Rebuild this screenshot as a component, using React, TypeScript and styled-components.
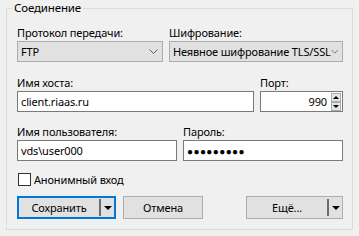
import React from 'react';
import styled, { createGlobalStyle } from 'styled-components';

const GlobalStyle = createGlobalStyle`
  html, body {
    margin: 0;
    padding: 0;
    background: #f0f0f0;
  }
  body {
    font-family: "Noto Sans", "Segoe UI", sans-serif;
    font-size: 11px;
    letter-spacing: -0.15px;
    color: #000;
  }
`;

const Window = styled.div`
  width: 359px;
  height: 236px;
  box-sizing: border-box;
  padding: 0 6px;
  background: #f0f0f0;
  overflow: hidden;
`;

const Group = styled.fieldset`
  margin: 2px 0 0;
  padding: 11px 9px 10px 10px;
  border: 1px solid #dcdcdc;
  min-width: 0;
  display: flex;
  flex-direction: column;
`;

const Legend = styled.legend`
  margin-left: -5px;
  padding: 0 2px;
  line-height: 12px;
  font-size: 11.5px;
`;

const Row = styled.div<{ $cols: string; $top?: number }>`
  display: grid;
  grid-template-columns: ${(p) => p.$cols};
  column-gap: 6px;
  margin-top: ${(p) => p.$top ?? 0}px;
`;

const Field = styled.div`
  display: flex;
  flex-direction: column;
  gap: 1px;
  min-width: 0;
`;

const Label = styled.label`
  line-height: 15px;
  height: 15px;
  white-space: nowrap;
`;

const Combo = styled.div`
  height: 21px;
  box-sizing: border-box;
  border: 1px solid #adadad;
  background: #e1e1e1;
  padding: 0 4px 0 3px;
  display: flex;
  align-items: center;
  justify-content: space-between;
  white-space: nowrap;
`;

const TextBox = styled.div<{ $align?: string }>`
  height: 21px;
  box-sizing: border-box;
  border: 1px solid #7a7a7a;
  background: #fff;
  padding: 0 1px 0 3px;
  display: flex;
  align-items: center;
  justify-content: ${(p) => p.$align ?? 'flex-start'};
  white-space: nowrap;
`;

const Dots = styled.span`
  font-size: 10px;
  letter-spacing: 0.4px;
  line-height: 1;
`;

const Spin = styled.div`
  display: flex;
  flex-direction: column;
  margin-left: 4px;
`;

const SpinButton = styled.div<{ $up?: boolean }>`
  width: 10px;
  height: 9px;
  box-sizing: border-box;
  border: 1px solid #adadad;
  background: #e5e5e5;
  display: flex;
  align-items: center;
  justify-content: center;
  &::after {
    content: '';
    border-left: 3px solid transparent;
    border-right: 3px solid transparent;
    ${(p) => (p.$up ? 'border-bottom: 3px solid #000;' : 'border-top: 3px solid #000;')}
  }
`;

const CheckRow = styled.div`
  display: flex;
  align-items: center;
  gap: 3px;
  margin-top: 12px;
  height: 13px;
  line-height: 13px;
`;

const CheckBox = styled.span`
  width: 13px;
  height: 13px;
  box-sizing: border-box;
  border: 1px solid #333;
  background: #fff;
  margin-left: 1px;
`;

const Buttons = styled.div`
  display: flex;
  margin-top: 10px;
  height: 23px;
`;

const Button = styled.div<{ $width: number; $default?: boolean; $left?: number; $auto?: boolean }>`
  width: ${(p) => p.$width}px;
  height: 23px;
  box-sizing: border-box;
  border: ${(p) => (p.$default ? '2px solid #0078d7' : '1px solid #adadad')};
  background: #e1e1e1;
  margin-left: ${(p) => (p.$auto ? 'auto' : `${p.$left ?? 0}px`)};
  display: flex;
  align-items: center;
  justify-content: center;
`;

const ButtonText = styled.span`
  flex: 1;
  text-align: center;
`;

const Separator = styled.span`
  width: 2px;
  height: 17px;
  background: #6d6d6d;
`;

const ArrowZone = styled.span`
  width: 13px;
  display: flex;
  justify-content: center;
  &::after {
    content: '';
    border-left: 4px solid transparent;
    border-right: 4px solid transparent;
    border-top: 4px solid #000;
  }
`;

const Chevron = () => (
  <svg width="9" height="6" viewBox="0 0 9 6">
    <polyline points="0.5,0.5 4.5,4.5 8.5,0.5" fill="none" stroke="#606060" strokeWidth="1" />
  </svg>
);

export default function App() {
  return (
    <>
      <GlobalStyle />
      <Window>
        <Group>
          <Legend>Соединение</Legend>
          <Row $cols="146px 174px">
            <Field>
              <Label>Протокол передачи:</Label>
              <Combo>
                <span>FTP</span>
                <Chevron />
              </Combo>
            </Field>
            <Field>
              <Label>Шифрование:</Label>
              <Combo>
                <span>Неявное шифрование TLS/SSL</span>
                <Chevron />
              </Combo>
            </Field>
          </Row>
          <Row $cols="237px 83px" $top={13}>
            <Field>
              <Label>Имя хоста:</Label>
              <TextBox>client.riaas.ru</TextBox>
            </Field>
            <Field>
              <Label>Порт:</Label>
              <TextBox $align="flex-end">
                <span>990</span>
                <Spin>
                  <SpinButton $up />
                  <SpinButton />
                </Spin>
              </TextBox>
            </Field>
          </Row>
          <Row $cols="160px 160px" $top={12}>
            <Field>
              <Label>Имя пользователя:</Label>
              <TextBox>vds\user000</TextBox>
            </Field>
            <Field>
              <Label>Пароль:</Label>
              <TextBox>
                <Dots>●●●●●●●●●</Dots>
              </TextBox>
            </Field>
          </Row>
          <CheckRow>
            <CheckBox />
            <span>Анонимный вход</span>
          </CheckRow>
          <Buttons>
            <Button $width={99} $default>
              <ButtonText>Сохранить</ButtonText>
              <Separator />
              <ArrowZone />
            </Button>
            <Button $width={80} $left={7}>
              <ButtonText>Отмена</ButtonText>
            </Button>
            <Button $width={97} $auto>
              <ButtonText>Ещё...</ButtonText>
              <Separator />
              <ArrowZone />
            </Button>
          </Buttons>
        </Group>
      </Window>
    </>
  );
}
